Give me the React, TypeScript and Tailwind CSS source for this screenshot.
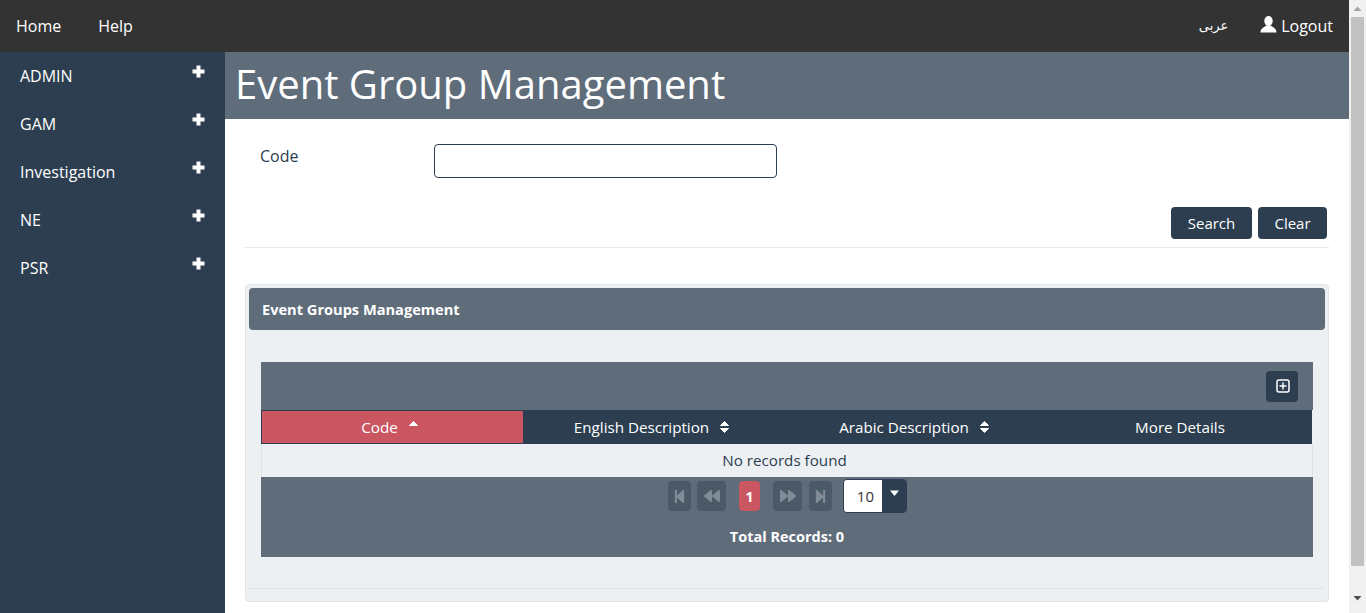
import { FaStepBackward, FaBackward, FaForward, FaStepForward } from "react-icons/fa";

const menu = ["ADMIN", "GAM", "Investigation", "NE", "PSR"];

function PlusIcon() {
  return (
    <svg width="13" height="13" viewBox="0 0 13 13" fill="white" className="mt-[1px]">
      <path d="M4.5 0.5h4v4h4v4h-4v4h-4v-4h-4v-4h4z" />
    </svg>
  );
}

function UserIcon() {
  return (
    <svg width="17" height="17" viewBox="0 0 17 17" fill="white" className="mb-[3px]">
      <ellipse cx="8.5" cy="5" rx="4.2" ry="5" />
      <path d="M6 9.5C5.5 11 0.5 11.5 0.5 16.5h16C16.5 11.5 11.5 11 11 9.5z" />
    </svg>
  );
}

function PlusSquare() {
  return (
    <svg width="14" height="14" viewBox="0 0 14 14" fill="none" stroke="white" strokeWidth="1.5" className="ml-[1px]">
      <rect x="1" y="1" width="12" height="12" rx="2" />
      <path d="M7 3.5v7M3.5 7h7" />
    </svg>
  );
}

function SortIcon({ up }: { up?: boolean }) {
  return (
    <svg width="11" height="14" viewBox="0 0 11 14" fill="white" stroke="white" strokeWidth="1" strokeLinejoin="round">
      <path d="M5.5 1.5L9.5 5.5H1.5z" />
      {!up && <path d="M1.5 8.5H9.5L5.5 12.5z" />}
    </svg>
  );
}

function PageButton({ className, children }: { className: string; children: React.ReactNode }) {
  return (
    <span className={`h-[30px] bg-[#2c3e50]/40 rounded flex items-center justify-center text-white/30 ${className}`}>
      {children}
    </span>
  );
}

function HeaderCell({ label, width, icon }: { label: string; width: string; icon?: boolean }) {
  return (
    <div className={`${width} flex items-center justify-center gap-[10px]`}>
      <span>{label}</span>
      {icon && <SortIcon />}
    </div>
  );
}

export default function App() {
  return (
    <div className="flex h-[613px] w-[1366px] overflow-hidden bg-white text-[16px] text-[#2c3e50] font-['Open_Sans','Noto_Sans',sans-serif]">
      <div className="w-[1349px] flex flex-col">
        <nav className="h-[52px] shrink-0 bg-[#333333] text-white flex items-center pl-4 pr-4 pb-[1px]">
          <a className="mr-[37px]">Home</a>
          <a>Help</a>
          <a className="ml-auto mr-[32px] text-[13px] font-['DejaVu_Sans',sans-serif]">عربى</a>
          <a className="flex items-center gap-[4px]">
            <UserIcon />
            Logout
          </a>
        </nav>
        <div className="flex flex-1 min-h-0">
          <aside className="w-[225px] shrink-0 bg-[#2c3e50] text-white pt-[4px]">
            {menu.map((m) => (
              <div key={m} className="h-[48px] pl-5 pr-5 flex items-start justify-between pt-[8px]">
                <span>{m}</span>
                <PlusIcon />
              </div>
            ))}
          </aside>
          <main className="flex-1 min-w-0">
            <h1 className="h-[67px] bg-[#5f6d7b] text-white text-[40px] leading-[64px] pl-[10px]">Event Group Management</h1>
            <div className="pl-5 pr-5">
              <div className="flex pt-[25px] pl-[15px]">
                <label className="w-[174px] pt-[1px] leading-[22px]">Code</label>
                <input className="w-[343px] h-[34px] border border-[#2c3e50] rounded bg-white" />
              </div>
              <div className="flex justify-end gap-[6px] mt-[29px] pr-[2px]">
                <button className="w-[81px] h-[32px] bg-[#2c3e50] text-white rounded text-[15px]">Search</button>
                <button className="w-[69px] h-[32px] bg-[#2c3e50] text-white rounded text-[15px]">Clear</button>
              </div>
              <hr className="mt-2 border-[#e5e7e9]" />
              <section className="mt-[36px] h-[318px] bg-[#ecf0f3] border border-[#e1e4e7] rounded p-[3px]">
                <div className="h-[42px] bg-[#5f6d7b] rounded text-white font-bold text-[14.6px] flex items-center pl-[13px] pt-[1px]">
                  Event Groups Management
                </div>
                <div className="mt-[32px] mx-[12px] text-[15.2px]">
                  <div className="h-[48px] bg-[#5f6d7b] flex items-center justify-end pr-[15px]">
                    <span className="w-[32px] h-[31px] bg-[#2c3e50] rounded flex items-center justify-center">
                      <PlusSquare />
                    </span>
                  </div>
                  <div className="h-[34px] mr-[1px] bg-[#2c3e50] text-white flex">
                    <div className="w-[261px] m-[1px] mr-0 bg-[#c95661] flex items-center justify-center gap-[10px] pr-[5px]">
                      <span>Code</span>
                      <SortIcon up />
                    </div>
                    <HeaderCell label="English Description" width="w-[265px] pr-[7px]" icon />
                    <HeaderCell label="Arabic Description" width="w-[265px] pr-[12px]" icon />
                    <HeaderCell label="More Details" width="flex-1 pr-[5px]" />
                  </div>
                  <div className="h-[33px] bg-[#ecf0f3] border-x border-[#dfe3e6] flex items-center justify-center pr-[5px]">
                    No records found
                  </div>
                  <div className="h-[80px] bg-[#5f6d7b] flex flex-col items-center">
                    <div className="flex items-center mt-[2px] h-[34px] pl-[1px]">
                      <PageButton className="w-[23px]"><FaStepBackward className="text-[15px]" /></PageButton>
                      <PageButton className="w-[29px] ml-[6px]"><FaBackward className="text-[16px]" /></PageButton>
                      <span className="w-[21px] h-[30px] ml-[13px] bg-[#c95661] rounded text-white font-bold text-[14px] flex items-center justify-center">1</span>
                      <PageButton className="w-[29px] ml-[13px]"><FaForward className="text-[16px]" /></PageButton>
                      <PageButton className="w-[23px] ml-[7px]"><FaStepForward className="text-[15px]" /></PageButton>
                      <div className="flex h-[34px] w-[64px] ml-[11px] rounded border border-[#2c3e50] overflow-hidden">
                        <span className="w-[38px] bg-white flex items-center justify-end pr-[8px] text-[#333333] text-[15px]">10</span>
                        <span className="flex-1 bg-[#2c3e50] flex justify-center pt-[10px]">
                          <svg width="11" height="7" viewBox="0 0 11 7" fill="white">
                            <path d="M1 0.5H10L5.5 6z" />
                          </svg>
                        </span>
                      </div>
                    </div>
                    <div className="mt-[13px] text-white font-bold text-[14.5px]">Total Records: 0</div>
                  </div>
                </div>
                <div className="mt-[31px] border-t border-[#e1e4e7]" />
              </section>
            </div>
          </main>
        </div>
      </div>
      <div className="w-[17px] shrink-0 bg-[#f1f1f1] flex flex-col items-center">
        <svg width="17" height="17" viewBox="0 0 17 17" className="shrink-0">
          <path d="M4.5 11L8.5 6.5L12.5 11Z" fill="#a3a3a3" />
        </svg>
        <div className="w-[13px] h-[549px] bg-[#c1c1c1]" />
        <svg width="17" height="17" viewBox="0 0 17 17" className="shrink-0 mt-auto mb-[6px]">
          <path d="M4.5 6L8.5 10.5L12.5 6Z" fill="#505050" />
        </svg>
      </div>
    </div>
  );
}
